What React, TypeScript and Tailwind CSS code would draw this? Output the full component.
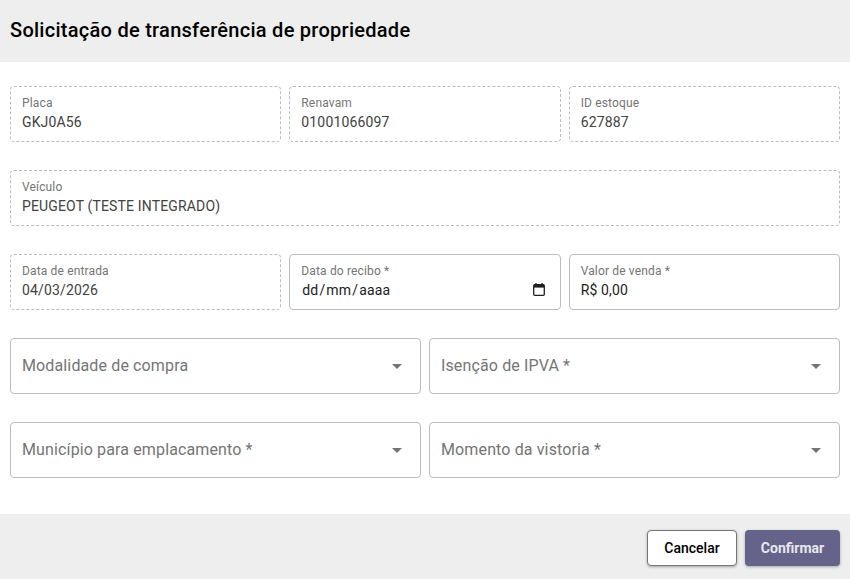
const font = "font-['Roboto',sans-serif]";

function Field({
  label,
  value,
  dashed,
  muted,
  icon,
}: {
  label: string;
  value: string;
  dashed?: boolean;
  muted?: boolean;
  icon?: boolean;
}) {
  return (
    <div className={`flex h-14 items-center rounded border border-[#bdbdbd] px-[11px] ${dashed ? 'border-dashed' : ''}`}>
      <div className="min-w-0 flex-1 pb-px">
        <div className="text-xs leading-[14px] tracking-[0.15px] text-[#757575]">{label}</div>
        <div className={`mt-[3px] text-sm leading-[18px] tracking-[0.15px] ${muted ? 'text-[#424242]' : 'text-[#212121]'}`}>
          {icon ? (
            <span className="pl-px">
              dd<span className="mx-px">/</span>mm<span className="mx-px">/</span>aaaa
            </span>
          ) : (
            value
          )}
        </div>
      </div>
      {icon && (
        <svg width="12" height="13" viewBox="0 0 12 13" className="mt-[14px] mr-[4px]" fill="none">
          <rect x="0.7" y="1.7" width="10.6" height="10.6" rx="1" stroke="#1f1f1f" strokeWidth="1.3" />
          <path d="M1 2h10v2.6H1z" fill="#1f1f1f" />
          <path d="M3 0v2M9 0v2" stroke="#1f1f1f" strokeWidth="1.3" />
        </svg>
      )}
    </div>
  );
}

function SelectField({ label }: { label: string }) {
  return (
    <div className="flex h-14 items-center justify-between rounded border border-[#bdbdbd] pl-[11px] pr-[18px]">
      <span className="text-base tracking-[0.13px] text-[#757575]">{label}</span>
      <span className="h-0 w-0 border-x-[5px] border-t-[5px] border-x-transparent border-t-[#757575]" />
    </div>
  );
}

export default function App() {
  return (
    <div className={`flex h-[579px] w-[850px] flex-col bg-white ${font}`}>
      <header className="flex h-[62px] items-center bg-[#eeeeee] px-2.5 pb-0.5">
        <h1 className="text-xl font-medium tracking-[0.27px] text-black">Solicitação de transferência de propriedade</h1>
      </header>

      <main className="flex flex-1 flex-col gap-7 px-2.5 pt-6">
        <div className="grid grid-cols-3 gap-2">
          <Field dashed muted label="Placa" value="GKJ0A56" />
          <Field dashed muted label="Renavam" value="01001066097" />
          <Field dashed muted label="ID estoque" value="627887" />
        </div>
        <Field dashed muted label="Veículo" value="PEUGEOT (TESTE INTEGRADO)" />
        <div className="grid grid-cols-3 gap-2">
          <Field dashed muted label="Data de entrada" value="04/03/2026" />
          <Field icon label="Data do recibo *" value="dd/mm/aaaa" />
          <Field label="Valor de venda *" value="R$ 0,00" />
        </div>
        <div className="grid grid-cols-2 gap-2">
          <SelectField label="Modalidade de compra" />
          <SelectField label="Isenção de IPVA *" />
        </div>
        <div className="grid grid-cols-2 gap-2">
          <SelectField label="Município para emplacamento *" />
          <SelectField label="Momento da vistoria *" />
        </div>
      </main>

      <footer className="flex h-[65px] items-center justify-end gap-2 bg-[#eeeeee] px-2.5 pt-[3px]">
        <button className="h-9 w-[90px] rounded border border-[#757575] bg-white text-sm font-medium text-black shadow-[0_1px_3px_rgba(0,0,0,0.3)]">
          Cancelar
        </button>
        <button className="h-9 w-[95px] rounded bg-[#656389] text-sm font-bold text-[#e8e8ee] shadow-[0_1px_3px_rgba(0,0,0,0.3)]">
          Confirmar
        </button>
      </footer>
    </div>
  );
}
